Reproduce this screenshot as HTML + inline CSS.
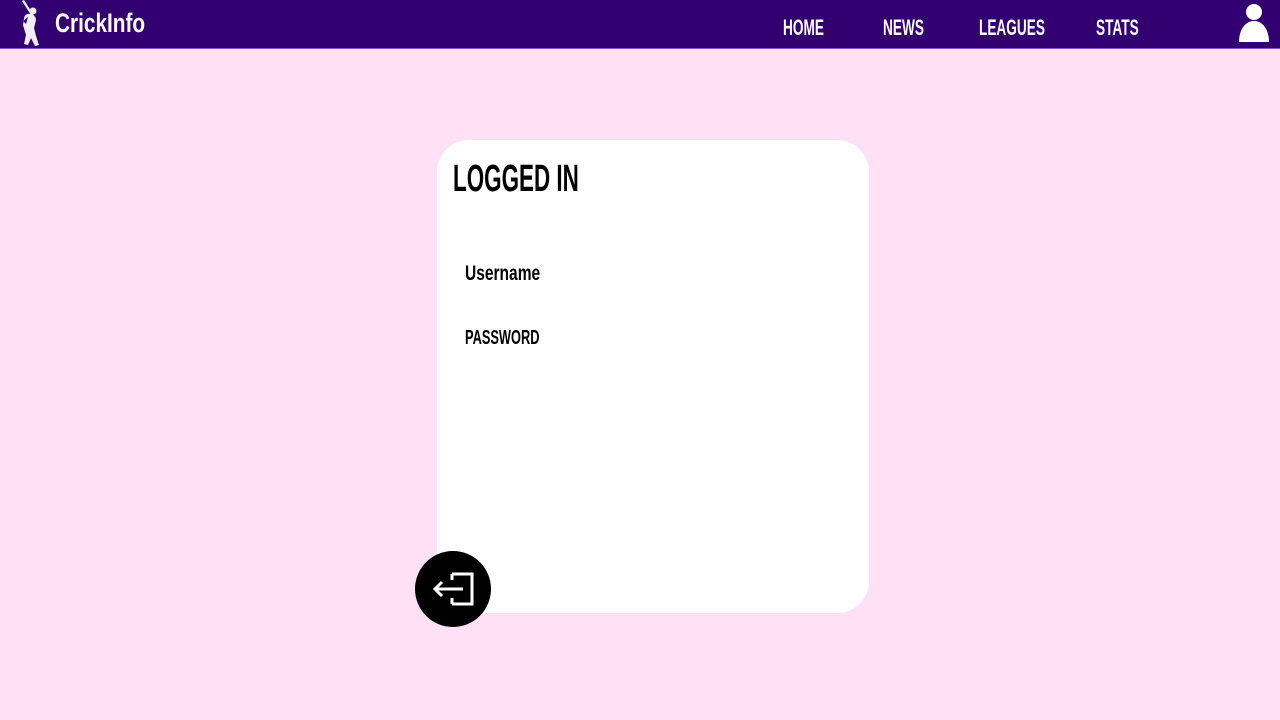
<!DOCTYPE html>
<html><head><meta charset="utf-8"><style>
*{margin:0;padding:0;box-sizing:border-box}
body{width:1280px;height:720px;background:#ffe0f4;font-family:"Liberation Sans",sans-serif;position:relative;overflow:hidden}
.hdr{position:absolute;left:0;top:0;width:1280px;height:49px;background:#330072;border-bottom:1px solid #8a4fc0}
.t{position:absolute;font-weight:bold;transform-origin:0 0;white-space:nowrap}
.nav{color:#fff;font-size:22px;top:15px;transform:scaleX(.62)}
.card{position:absolute;left:437px;top:140px;width:432px;height:473px;background:#fff;border-radius:32px}
.btn{position:absolute;left:415px;top:551px;width:76px;height:76px;border-radius:50%;background:#000}
</style></head><body>
<div class="hdr">
<svg style="position:absolute;left:16px;top:0" width="30" height="48" viewBox="0 0 30 48">
<path d="M6 1l9 14 2-1-9-14z" fill="#f2eef7"/>
<circle cx="17" cy="11" r="3.5" fill="#f2eef7"/>
<path d="M12 14c4-1 8 2 8 6l-2 8 2 8 3 9-4 1-4-8-3 7-4-1 2-9-3-10 1-6c0-3 2-5 4-5z M12 17l-5 4 3 3z" fill="#f2eef7"/>
</svg>
<div class="t" style="left:55px;top:8px;color:#fff;font-size:27px;transform:scaleX(.77)">CrickInfo</div>
<div class="t nav" style="left:783px">HOME</div>
<div class="t nav" style="left:883px">NEWS</div>
<div class="t nav" style="left:979px">LEAGUES</div>
<div class="t nav" style="left:1096px">STATS</div>
<svg style="position:absolute;left:1238px;top:3px" width="32" height="40" viewBox="0 0 32 40">
<circle cx="16" cy="9" r="8" fill="#fff"/><path d="M1 39c0-12 6-21 15-21s15 9 15 21z" fill="#fff"/></svg>
</div>
<div class="card"></div>
<div class="t" style="left:453px;top:158px;font-size:38px;transform:scaleX(.59);color:#000">LOGGED IN</div>
<div class="t" style="left:465px;top:262px;font-size:21px;transform:scaleX(.74)">Username</div>
<div class="t" style="left:465px;top:327px;font-size:20px;transform:scaleX(.64)">PASSWORD</div>
<div class="btn"><svg width="76" height="76" viewBox="0 0 76 76" fill="none" stroke="#fff" stroke-width="3">
<path d="M37 23h20v30H37 M37 23v6 M37 53v-6 M48 38H20 M27 31l-7 7 7 7"/></svg></div>
</body></html>
